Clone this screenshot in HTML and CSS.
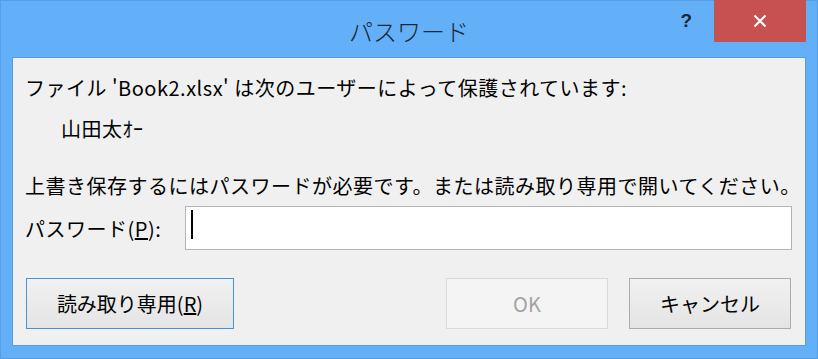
FILE: index.html
```html
<!DOCTYPE html>
<html lang="ja">
<head>
    <meta charset="UTF-8">
    <title>パスワード</title>
    <link rel="stylesheet" href="styles.css">
</head>
<body>

<div class="window">
    <div class="titlebar">
        <div class="title">パスワード</div>
        <div class="controls">
            <span class="help">?</span>
            <span class="close">
                <svg width="14" height="14" viewBox="0 0 14 14">
                    <path d="M1.5 1.5 L12.5 12.5 M12.5 1.5 L1.5 12.5" stroke="#fff" stroke-width="2" fill="none"/>
                </svg>
            </span>
        </div>
    </div>

    <div class="panel">
        <div class="msg">ファイル 'Book2.xlsx' は次のユーザーによって保護されています:</div>
        <div class="msg user">山田太ｵｰ</div>
        <div class="msg notice">上書き保存するにはパスワードが必要です。または読み取り専用で開いてください。</div>

        <div class="pw-row">
            <label class="pw-label" for="pw">パスワード(<u>P</u>):</label>
            <div class="pw-input" id="pw"><span class="caret"></span></div>
        </div>

        <div class="buttons">
            <button class="btn btn-default">読み取り専用(<u>R</u>)</button>
            <div class="spacer"></div>
            <button class="btn btn-disabled">OK</button>
            <button class="btn">キャンセル</button>
        </div>
    </div>
</div>

</body>
</html>
```

FILE: styles.css
```css
body {
    margin: 0;
    font-family: 'Noto Sans CJK JP', 'Noto Sans', sans-serif;
    color: #000;
}

.window {
    width: 818px;
    height: 359px;
    box-sizing: border-box;
    background: #63b0f8;
    border: 1px solid #579ee6;
    display: flex;
    flex-direction: column;
}

.titlebar {
    height: 56px;
    position: relative;
    display: flex;
    justify-content: center;
    align-items: center;
}

.title {
    font-size: 24px;
    font-weight: 300;
    color: #1b2633;
    margin-top: 3px;
}

.controls {
    position: absolute;
    top: -1px;
    right: 11px;
    display: flex;
    align-items: flex-start;
}

.help {
    font-family: 'Liberation Sans', sans-serif;
    font-weight: bold;
    font-size: 19px;
    color: #1b2633;
    margin-top: 10px;
    margin-right: 22px;
}

.close {
    width: 92px;
    height: 42px;
    background: #c75050;
    display: flex;
    justify-content: center;
    align-items: center;
}

.panel {
    flex: 1;
    margin: 0 11px 12px;
    background: #f0f0f0;
    border: 1px solid #5b9bd8;
    padding: 16px 13px 0 12px;
    display: flex;
    flex-direction: column;
}

.msg {
    font-size: 20px;
    line-height: 28px;
    letter-spacing: 0.5px;
    white-space: nowrap;
}

.user {
    margin-top: 13px;
    padding-left: 36px;
}

.notice {
    margin-top: 29px;
}

.pw-row {
    margin-top: 6px;
    display: flex;
    align-items: center;
}

.pw-label {
    width: 160px;
    font-size: 20px;
    letter-spacing: 0.5px;
}

.pw-input {
    flex: 1;
    height: 44px;
    box-sizing: border-box;
    background: #fff;
    border: 1px solid #b4b4b4;
    padding: 3px 5px;
}

.caret {
    display: block;
    width: 2px;
    height: 29px;
    background: #000;
}

.buttons {
    margin-top: 28px;
    margin-left: 1px;
    margin-right: 1px;
    display: flex;
    gap: 21px;
}

.spacer {
    flex: 1;
}

.btn {
    width: 162px;
    height: 51px;
    font-family: 'Noto Sans CJK JP', 'Noto Sans', sans-serif;
    font-size: 20px;
    color: #000;
    background: linear-gradient(#f1f1f1, #e4e4e4);
    border: 1px solid #acacac;
    padding: 0;
}

.btn-default {
    width: 208px;
    border-color: #4a93d2;
}

.btn-disabled {
    color: #a3a3a3;
    background: #f4f4f4;
    border-color: #d9d9d9;
}
```
